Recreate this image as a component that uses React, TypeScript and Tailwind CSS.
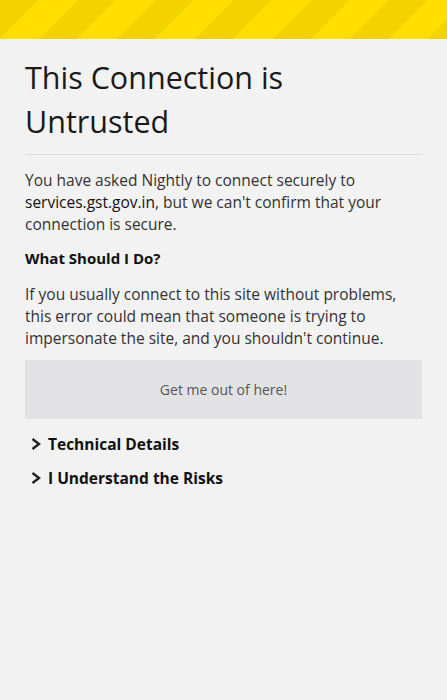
export default function App() {
  return (
    <div className="min-h-[700px] bg-[#f2f2f2] font-['Open_Sans',sans-serif] text-[#222]">
      {/* warning stripe banner */}
      <div className="h-[39px] bg-[repeating-linear-gradient(135deg,#f2d300_0px,#f2d300_27px,#ffde00_27px,#ffde00_55px)]" />

      <div className="px-[25px]">
        <h1 className="mt-[16px] text-[30.5px] leading-[44px] font-normal text-[#1a1a1a]">
          This Connection is
          <br />
          Untrusted
        </h1>
        <hr className="mt-[11px] border-t border-[#dcdcdc]" />

        <p className="mt-[14px] text-[15.5px] leading-[22px] text-[#333]">
          You have asked Nightly to connect securely to{' '}
          <span className="font-medium text-[#111]">services.gst.gov.in</span>, but we can't confirm that your
          connection is secure.
        </p>

        <h2 className="mt-[12px] text-[15px] leading-[22px] font-bold text-[#111]">What Should I Do?</h2>

        <p className="mt-[14px] text-[15.5px] leading-[22px] text-[#333]">
          If you usually connect to this site without problems, this error could mean that someone is trying to
          impersonate the site, and you shouldn't continue.
        </p>

        <button className="mt-[11px] flex h-[59px] w-full items-center justify-center bg-[#e2e2e5] text-[14px] text-[#555]">
          Get me out of here!
        </button>

        <div className="mt-[14px] flex flex-col gap-[12px]">
          {['Technical Details', 'I Understand the Risks'].map((t) => (
            <div key={t} className="flex items-center gap-[6px] text-[15.5px] leading-[22px] font-bold text-[#111]">
              <svg width="12" height="14" viewBox="0 0 12 14" className="ml-[5px]">
                <path d="M2.5 2 L9 7 L2.5 12" fill="none" stroke="#222" strokeWidth="2.4" />
              </svg>
              {t}
            </div>
          ))}
        </div>
      </div>
    </div>
  )
}
